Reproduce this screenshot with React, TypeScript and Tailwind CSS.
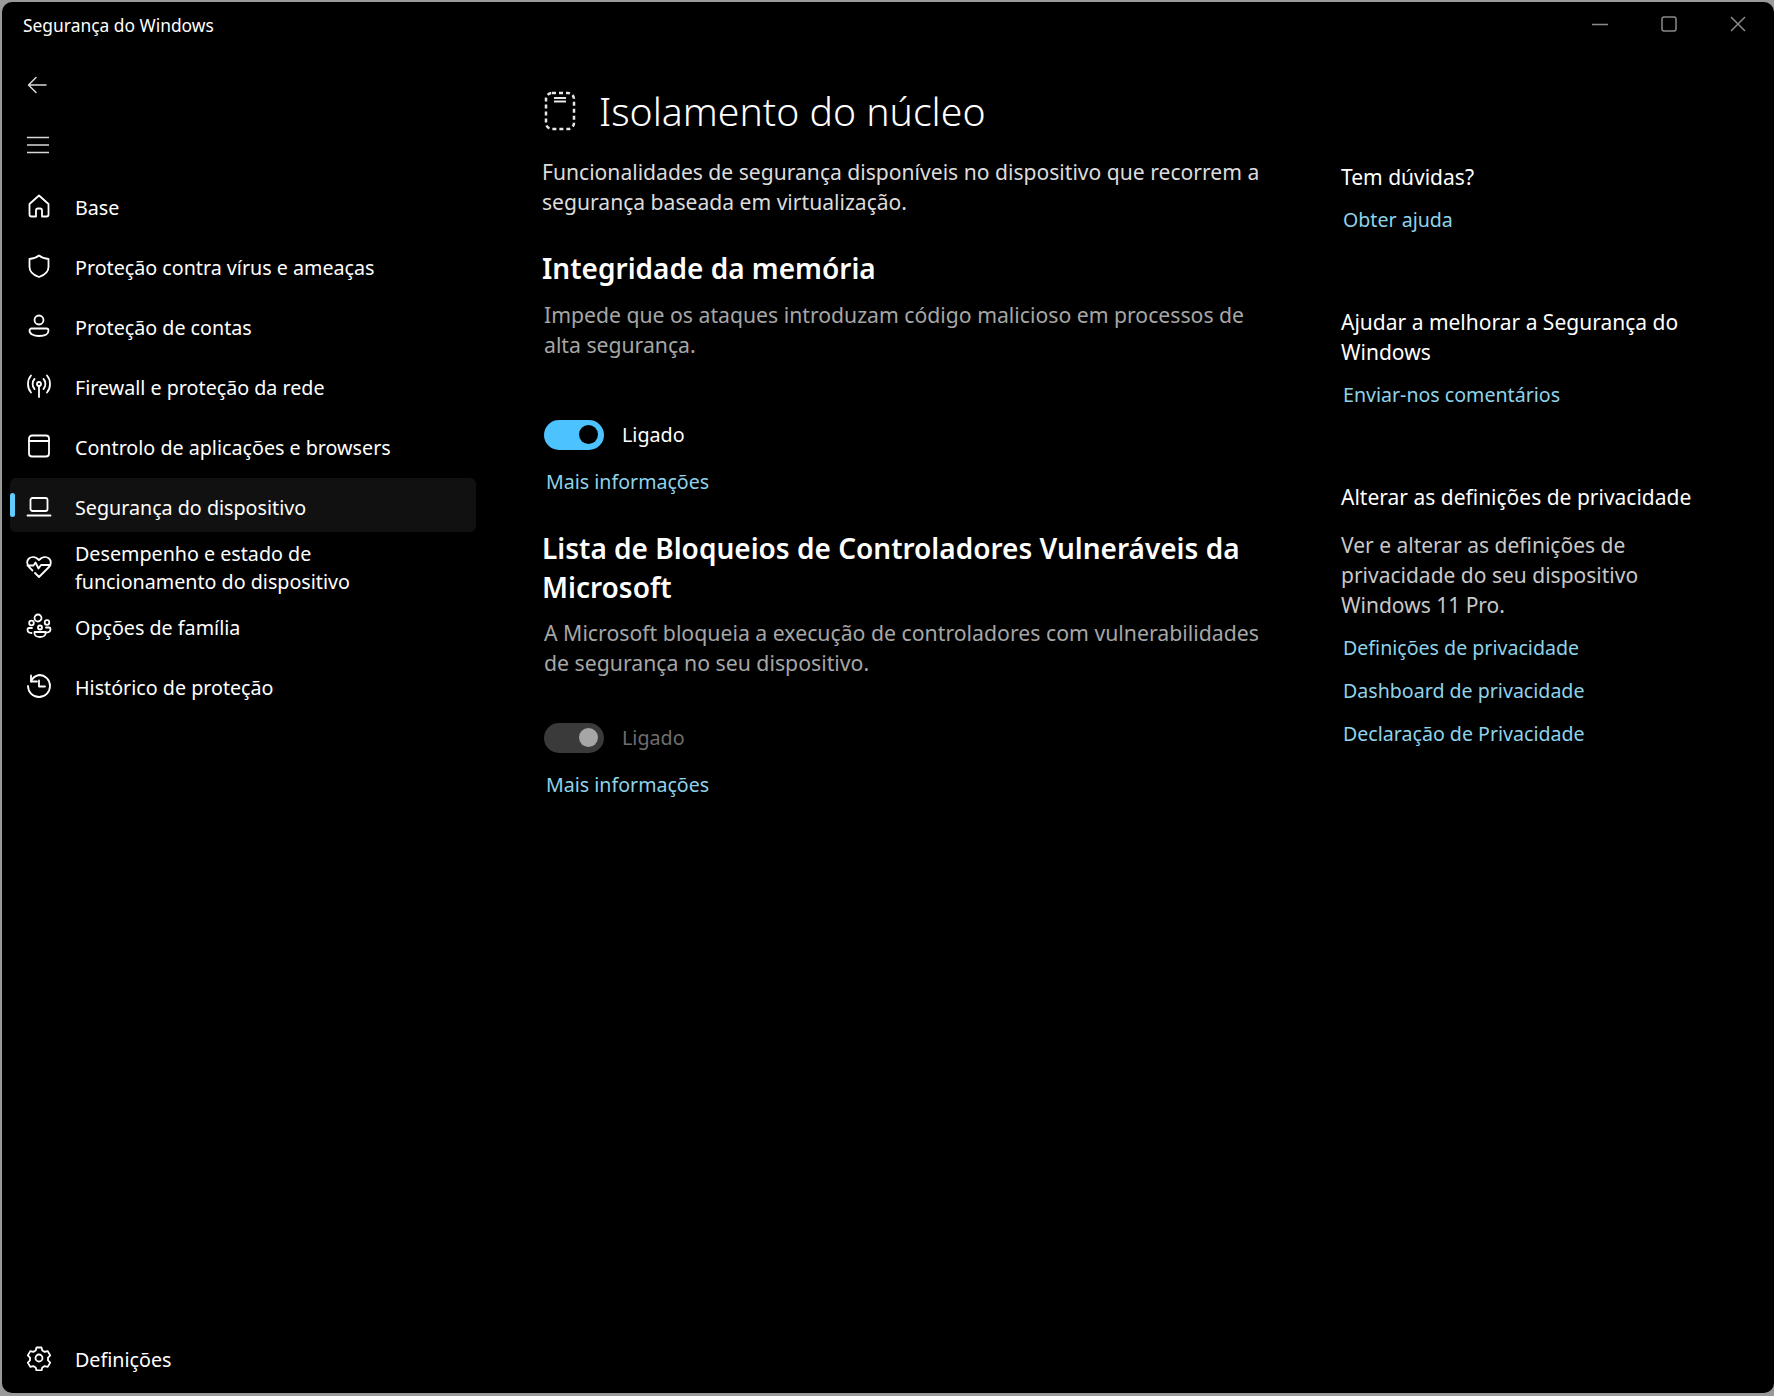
import React from 'react';

const font = '[font-family:"Noto_Sans","Open_Sans",sans-serif]';

const Ico: React.FC<{ children: React.ReactNode; w?: number }> = ({ children, w = 1.8 }) => (
  <svg width="26" height="26" viewBox="0 0 26 26" fill="none" stroke="currentColor" strokeWidth={w} strokeLinecap="round" strokeLinejoin="round" className="shrink-0">
    {children}
  </svg>
);

const navItems: { label: React.ReactNode; icon: React.ReactNode; active?: boolean }[] = [
  { label: 'Base', icon: <path d="M13 2.500 3.500 11v10.500a2 2 0 0 0 2 2h4.500v-6a2 2 0 0 1 2-2h2a2 2 0 0 1 2 2v6h4.500a2 2 0 0 0 2-2V11z" /> },
  { label: 'Proteção contra vírus e ameaças', icon: <path d="M13 2.500c-2.500 2-6 3.300-9.500 3.500v8c0 4.500 3.500 8 9.500 10 6-2 9.500-5.500 9.500-10V6C19 5.800 15.500 4.500 13 2.500z" /> },
  { label: 'Proteção de contas', icon: <><circle cx="13" cy="7" r="4.500" /><path d="M5.500 15.500h15a2 2 0 0 1 2 2c0 3.500-4 5.500-9.500 5.500s-9.500-2-9.500-5.500a2 2 0 0 1 2-2z" /></> },
  { label: 'Firewall e proteção da rede', icon: <><circle cx="13" cy="11" r="2" /><path d="M13 13v11M8.500 16c-2.500-2.500-2.500-7.500 0-10M17.500 6c2.500 2.500 2.500 7.500 0 10M5 19.500C1 15 1 7 5 2.500M21 2.500c4 4.500 4 12.500 0 17" /></> },
  { label: 'Controlo de aplicações e browsers', icon: <><rect x="3" y="2.500" width="20" height="21" rx="3" /><path d="M3 8h20" /></> },
  { label: 'Segurança do dispositivo', active: true, icon: <><rect x="4.500" y="5" width="17" height="13" rx="2" /><path d="M1.500 22.500h23" /></> },
  { label: <>Desempenho e estado de<br />funcionamento do dispositivo</>, icon: <path d="M6.500 17.500 3.500 14.500C.5 11.500.5 7.500 3 5.500c3-2.500 7-1.500 10 1.500 3-3 7-4 10-1.500 2.500 2 2.500 6 -.5 9l-9.500 9.500-4-4M1.500 12.500h6l2-3 3 6 2.500-3.500h9.500" /> },
  { label: 'Opções de família', icon: <><circle cx="12" cy="5" r="3.500" /><circle cx="21" cy="9.500" r="2.300" /><circle cx="5.500" cy="10" r="2.300" /><circle cx="14" cy="14.500" r="2" /><path d="M6 15H3a1.500 1.500 0 0 0-1.500 1.500c0 2 1.500 3.500 4 3.500M20 14.500h3a1.500 1.500 0 0 1 1.500 1.500c0 2-1.500 3.500-4 3.500M8.500 19h11v1.500c0 2-2.500 3.500-5.500 3.500s-5.500-1.500-5.500-3.500z" /></> },
  { label: 'Histórico de proteção', icon: <><path d="M5 2.500v6h6" /><path d="M5 8.500A11 11 0 0 1 13 2a11 11 0 1 1-11 11" /><path d="M13 7.500v6h6" /></> },
];

const NavRow: React.FC<{ label: React.ReactNode; icon: React.ReactNode; active?: boolean }> = ({ label, icon, active }) => (
  <div className={`flex items-center h-[54px] rounded-md ${active ? 'bg-[#111111]' : ''}`}>
    <span className={`w-[5px] h-[24px] rounded-full shrink-0 ${active ? 'bg-[#60cdff]' : ''}`} />
    <span className="w-[11px] shrink-0" />
    <span className="text-white mt-[2px]"><Ico>{icon}</Ico></span>
    <span className="ml-[23px] mt-[5px] text-[19.7px] leading-[28px] text-white whitespace-nowrap">{label}</span>
  </div>
);

const Toggle: React.FC<{ on?: boolean }> = ({ on }) => (
  <div className={`w-[60px] h-[30px] rounded-full flex items-center justify-end pr-[6px] ${on ? 'bg-[#4cc2ff]' : 'bg-[#3a3a3a]'}`}>
    <span className={`w-[19px] h-[19px] rounded-full ${on ? 'bg-black' : 'bg-[#a6a6a6]'}`} />
  </div>
);

const Link: React.FC<{ children: React.ReactNode; className?: string }> = ({ children, className = '' }) => (
  <a className={`block text-[19.6px] leading-[30px] text-[#8fd3ea] ${className}`}>{children}</a>
);

export default function App() {
  return (
    <div className={`h-screen bg-[#9a9a9a] pt-[2px] pl-[2px] pb-[3px] ${font}`}>
      <div className="h-full bg-black rounded-[10px] flex flex-col overflow-hidden">
        {/* title bar */}
        <div className="h-[53px] shrink-0 flex items-start justify-between">
          <div className="ml-[21px] mt-[10px] text-[17.4px] leading-[26px] text-white">Segurança do Windows</div>
          <div className="flex items-center mt-[14px] text-[#8a8a8a]">
            <svg width="16" height="16" viewBox="0 0 16 16" stroke="currentColor" strokeWidth="1.500" fill="none"><path d="M0 8.500h16" /></svg>
            <svg width="16" height="16" viewBox="0 0 16 16" stroke="currentColor" strokeWidth="1.500" fill="none" className="ml-[53px]"><rect x="1" y="1" width="14" height="14" rx="2" /></svg>
            <svg width="16" height="16" viewBox="0 0 16 16" stroke="currentColor" strokeWidth="1.500" fill="none" className="ml-[53px] mr-[28px]"><path d="M1 1l14 14M15 1 1 15" /></svg>
          </div>
        </div>

        <div className="flex-1 flex min-h-0">
          {/* sidebar */}
          <aside className="w-[540px] shrink-0 flex flex-col">
            <div className="h-[60px] flex items-center pl-[23px]">
              <svg width="26" height="26" viewBox="0 0 26 26" fill="none" stroke="currentColor" strokeWidth="1.500" strokeLinecap="round" strokeLinejoin="round" className="text-[#d8d8d8]"><path d="M4 13h17M11 5.500 3.500 13l7.500 7.500" /></svg>
            </div>
            <div className="h-[60px] flex items-center pl-[23px]">
              <svg width="26" height="26" viewBox="0 0 26 26" fill="none" stroke="currentColor" strokeWidth="1.500" className="text-[#d8d8d8]"><path d="M2 5.500h22M2 13h22M2 20.500h22" /></svg>
            </div>
            <nav className="w-[466px] ml-[8px] mt-[3px] flex flex-col gap-[6px]">
              {navItems.map((item, i) => (
                <NavRow key={i} {...item} />
              ))}
            </nav>
            <div className="mt-auto mb-[9px] w-[466px] ml-[8px]">
              <NavRow
                label="Definições"
                icon={<><circle cx="13" cy="13" r="3.500" /><path d="M10.500 2.500h5l.8 3 2.400 1.400 3-.8 2.500 4.300-2.200 2.200v2.800l2.200 2.200-2.500 4.300-3-.8-2.400 1.400-.8 3h-5l-.8-3-2.400-1.400-3 .8-2.500-4.300 2.200-2.200v-2.800L1.800 10.400l2.500-4.300 3 .8 2.400-1.400z" /></>}
              />
            </div>
          </aside>

          {/* main column */}
          <main className="w-[799px] shrink-0">
            <div className="flex items-center h-[70px] mt-[21px]">
              <svg width="34" height="40" viewBox="0 0 34 40" fill="none" stroke="#e8e8e8" strokeWidth="2.500" strokeDasharray="4 3" className="ml-[1px] shrink-0">
                <rect x="3" y="2" width="28" height="36" rx="6" />
                <path d="M11 7h12M11 10.500h12" strokeDasharray="none" strokeWidth="1.800" />
              </svg>
              <h1 className="ml-[22px] text-[39.2px] leading-[56px] font-light text-white">Isolamento do núcleo</h1>
            </div>
            <p className="mt-[11px] text-[21.1px] leading-[30px] text-[#dcdcdc] whitespace-nowrap">
              Funcionalidades de segurança disponíveis no dispositivo que recorrem a<br />segurança baseada em virtualização.
            </p>
            <h2 className="mt-[32px] text-[28px] leading-[39px] font-semibold text-white">Integridade da memória</h2>
            <p className="mt-[12px] ml-[2px] text-[21.2px] leading-[30px] text-[#a6a6a6] whitespace-nowrap">
              Impede que os ataques introduzam código malicioso em processos de<br />alta segurança.
            </p>
            <div className="mt-[59px] ml-[2px] flex items-center">
              <Toggle on />
              <span className="ml-[18px] mt-[1px] text-[19.7px] leading-[30px] text-white">Ligado</span>
            </div>
            <Link className="mt-[17px] ml-[4px]">Mais informações</Link>
            <h2 className="mt-[32px] text-[28px] leading-[39px] font-semibold text-white whitespace-nowrap">
              Lista de Bloqueios de Controladores Vulneráveis da<br />Microsoft
            </h2>
            <p className="mt-[11px] ml-[2px] text-[21.25px] leading-[30px] text-[#a6a6a6] whitespace-nowrap">
              A Microsoft bloqueia a execução de controladores com vulnerabilidades<br />de segurança no seu dispositivo.
            </p>
            <div className="mt-[44px] ml-[2px] flex items-center">
              <Toggle />
              <span className="ml-[18px] mt-[1px] text-[19.7px] leading-[30px] text-[#6e6e6e]">Ligado</span>
            </div>
            <Link className="mt-[17px] ml-[4px]">Mais informações</Link>
          </main>

          {/* right column */}
          <section className="flex-1 pt-[107px] text-[21px] leading-[30px]">
            <h3 className="text-white">Tem dúvidas?</h3>
            <Link className="mt-[13px] ml-[2px]">Obter ajuda</Link>
            <h3 className="mt-[72px] text-white">Ajudar a melhorar a Segurança do<br />Windows</h3>
            <Link className="mt-[13px] ml-[2px]">Enviar-nos comentários</Link>
            <h3 className="mt-[72px] text-white">Alterar as definições de privacidade</h3>
            <p className="mt-[18px] text-[#c8c8c8]">Ver e alterar as definições de<br />privacidade do seu dispositivo<br />Windows 11 Pro.</p>
            <Link className="mt-[13px] ml-[2px]">Definições de privacidade</Link>
            <Link className="mt-[13px] ml-[2px]">Dashboard de privacidade</Link>
            <Link className="mt-[13px] ml-[2px]">Declaração de Privacidade</Link>
          </section>
        </div>
      </div>
    </div>
  );
}
